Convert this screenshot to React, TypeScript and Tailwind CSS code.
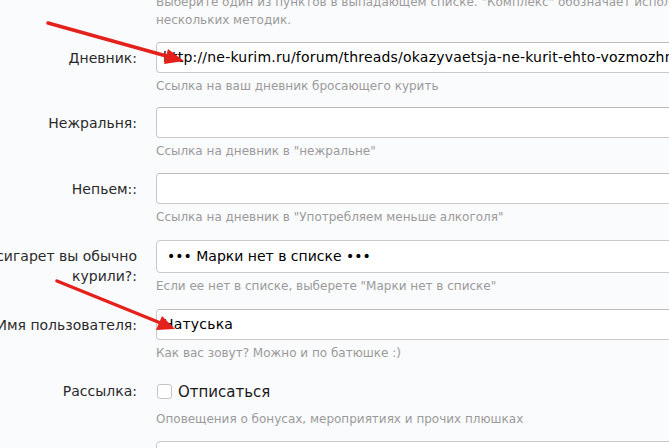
import React from "react";

type Row = {
  label: React.ReactNode;
  value?: string;
  hint: string;
  kind?: "input" | "select" | "checkbox";
};

const rows: Row[] = [
  {
    label: "Дневник:",
    value: "http://ne-kurim.ru/forum/threads/okazyvaetsja-ne-kurit-ehto-vozmozhno.1234/",
    hint: "Ссылка на ваш дневник бросающего курить",
  },
  { label: "Нежральня:", value: "", hint: 'Ссылка на дневник в "нежральне"' },
  { label: "Непьем::", value: "", hint: 'Ссылка на дневник в "Употребляем меньше алкоголя"' },
  {
    label: (
      <>
        Марку сигарет вы обычно
        <br />
        курили?:
      </>
    ),
    value: "••• Марки нет в списке •••",
    hint: 'Если ее нет в списке, выберете "Марки нет в списке"',
    kind: "select",
  },
  { label: "Имя пользователя:", value: "Натуська", hint: "Как вас зовут? Можно и по батюшке :)" },
  {
    label: "Рассылка:",
    value: "Отписаться",
    hint: "Оповещения о бонусах, мероприятиях и прочих плюшках",
    kind: "checkbox",
  },
];

function Field({ row }: { row: Row }) {
  if (row.kind === "checkbox") {
    return (
      <div className="flex h-[31px] items-start pt-[9px]">
        <span className="ml-px h-[15px] w-[15px] rounded-[3px] border border-[#c4c4c4] bg-white" />
        <span className="ml-[6px] -mt-[2px] text-[15px] leading-[20px] text-[#1a1a1a]">{row.value}</span>
      </div>
    );
  }
  if (row.kind === "select") {
    return (
      <div className="flex h-[33px] w-[640px] items-center whitespace-nowrap rounded-[4px] border border-[#c9c9c9] bg-white pl-[10px] text-[14px] text-black">
        {row.value}
      </div>
    );
  }
  return (
    <div className="flex h-[31px] w-[640px] items-center overflow-hidden whitespace-nowrap rounded-[4px] border border-[#c9c9c9] border-t-[#bcbcbc] bg-white pl-[6px] text-[14px] tracking-[0.2px] text-black">
      {row.value}
    </div>
  );
}

export default function App() {
  return (
    <div className="relative h-[448px] w-[669px] overflow-hidden bg-[#fafbfd] font-['DejaVu_Sans',sans-serif]">
      <div className="-ml-[80px] -mt-[7px] flex flex-col">
        <div className="grid grid-cols-[217px_1fr] gap-x-[19px]">
          <div />
          <div className="whitespace-nowrap text-[12px] leading-[18px] text-[#9a9a9a]">
            Выберите один из пунктов в выпадающем списке. "Комплекс" обозначает использование
            <br />
            нескольких методик.
          </div>
        </div>
        <div className="mt-[13px] flex flex-col">
          {rows.map((row, i) => (
            <div
              key={i}
              className={
                "grid grid-cols-[217px_1fr] gap-x-[19px] " +
                (i === 0 ? "pb-[13px]" : i === 2 || i === 3 ? "pb-[15px]" : "pb-[14px]")
              }
            >
              <div className="whitespace-nowrap pt-[6px] text-right text-[14px] leading-[20px] text-[#2a2a2a]">
                {row.label}
              </div>
              <div className="flex flex-col">
                <Field row={row} />
                <div className="mt-[5px] whitespace-nowrap text-[12px] leading-[16px] text-[#9a9a9a]">
                  {row.hint}
                </div>
              </div>
            </div>
          ))}
          <div className="grid grid-cols-[217px_1fr] gap-x-[19px]">
            <div />
            <div className="h-[31px] w-[640px] rounded-[4px] border border-[#c9c9c9] bg-white" />
          </div>
        </div>
      </div>

      <svg className="pointer-events-none absolute inset-0" width="669" height="448" viewBox="0 0 669 448">
        <g stroke="#e5211c" strokeWidth="3.5" strokeLinecap="round" fill="#e5211c">
          <line x1="48" y1="23" x2="170" y2="57" />
          <polygon points="184,61 168,49 164,64" stroke="none" />
          <line x1="57" y1="281" x2="163" y2="324" />
          <polygon points="175,329 162,316 156,330" stroke="none" />
        </g>
      </svg>
    </div>
  );
}
